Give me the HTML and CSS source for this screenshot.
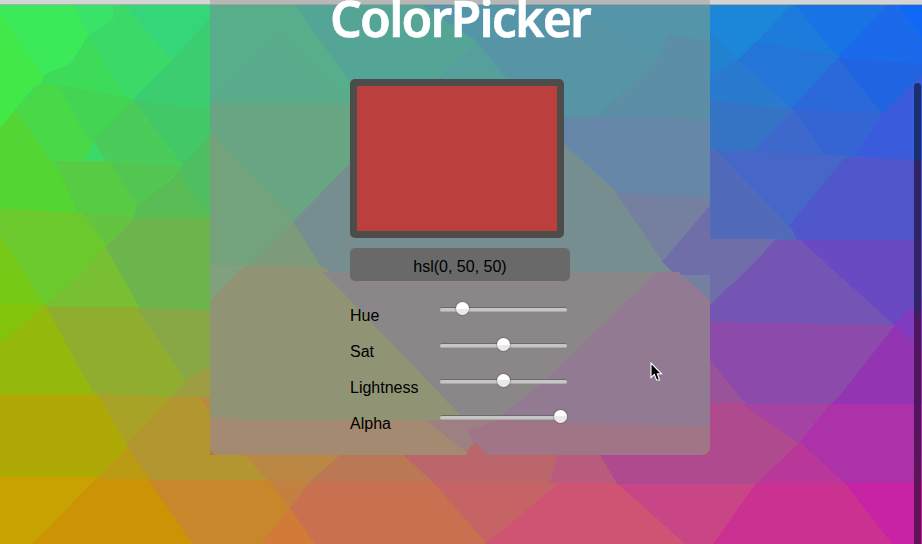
FILE: index.html
```
<!DOCTYPE html>
<html lang="en">
<head>
<meta charset="utf-8">
<title>ColorPicker</title>
<link rel="stylesheet" href="styles.css">
</head>
<body>
<svg class="backdrop" viewBox="0 0 922 544" shape-rendering="crispEdges" aria-hidden="true">
<path fill="#3ad968" d="M0 0H250V220H0z"/>
<path fill="#6fbb36" d="M0 200H210V308H0z"/>
<path fill="#92b01e" d="M0 305H210V396H0z"/>
<path fill="#afa30f" d="M0 394H210V481H0z"/>
<path fill="#ca6a55" d="M210 200H614V544H210z"/>
<path fill="#4166cc" d="M614 0H922V240H614z"/>
<path fill="#7450b4" d="M614 240H922V325H614z"/>
<path fill="#a43c9e" d="M614 325H922V484H614z"/>
<path fill="#cb3a88" d="M614 484H922V544H614z"/>
<path fill="#3ce958" d="M0 5H73L88 35 72 62 45 80 0 15z"/>
<path fill="#41e848" d="M0 15L46 80 33 88 15 110 0 128z"/>
<path fill="#38e368" d="M73 5H113V20L88 35z"/>
<path fill="#35d57a" d="M125 5H210V20L172 60z"/>
<path fill="#3edb59" d="M88 35L75 62 45 74 40 86 60 92 127 100z"/>
<path fill="#3bcd70" d="M172 60L210 18V112L133 100z"/>
<path fill="#49d948" d="M40 83L64 86 95 140 85 161H55L15 110z"/>
<path fill="#44d453" d="M58 85L127 97 135 101 100 142 88 140z"/>
<path fill="#42c866" d="M133 100L210 110V136L183 166z"/>
<path fill="#4bcb59" d="M133 100L185 168H110L93 140z"/>
<path fill="#53d534" d="M0 128L15 110 60 170 83 214H0z"/>
<path fill="#58cb45" d="M55 161H110L138 206 133 219 78 214z"/>
<path fill="#52c651" d="M110 162L183 167 138 208z"/>
<path fill="#4fbe60" d="M181 167L210 135V219L176 174z"/>
<path fill="#59bc55" d="M133 219L138 206 178 173 210 217V219z"/>
<path fill="#6bc92e" d="M0 209L85 213 106 245 86 272 45 306 0 235z"/>
<path fill="#64c340" d="M83 213L135 217 108 248z"/>
<path fill="#6cb54c" d="M135 218H210V312L138 308 105 248z"/>
<path fill="#77c917" d="M0 234L45 306H0z"/>
<path fill="#78bf34" d="M105 246L140 308H44L86 270z"/>
<path fill="#82c30c" d="M0 304H46L0 345z"/>
<path fill="#94b80b" d="M0 344L46 305 97 394H0z"/>
<path fill="#90ad2f" d="M46 307H137L190 380 175 398H96z"/>
<path fill="#88a845" d="M137 308L210 310V369L187 382z"/>
<path fill="#9d9e42" d="M172 398L187 379 210 366V400z"/>
<path fill="#afa906" d="M0 394H97L129 447 95 479H0z"/>
<path fill="#a8a326" d="M97 394L176 397 128 447z"/>
<path fill="#b39630" d="M172 397H205L272 482H149L126 445z"/>
<path fill="#b98845" d="M200 397H210V412z"/>
<path fill="#bb9b14" d="M94 480L127 447 151 480z"/>
<path fill="#c8a200" d="M0 477H98L35 544H0z"/>
<path fill="#cd9307" d="M95 479H150L193 544H33z"/>
<path fill="#c9872c" d="M149 480H271L291 508 262 544H192z"/>
<path fill="#ba8744" d="M245 455H342L310 483H270z"/>
<path fill="#c28140" d="M270 481H312L290 510z"/>
<path fill="#d27a37" d="M291 506L261 544H318z"/>
<path fill="#bb7855" d="M340 455H415L436 483H308z"/>
<path fill="#c97050" d="M310 482H435L487 544H315L290 508z"/>
<path fill="#ba666b" d="M403 455H559V483H434z"/>
<path fill="#c66364" d="M433 482H565L515 524 487 544z"/>
<path fill="#cf5373" d="M560 482H620L686 544H484L515 520z"/>
<path fill="#b95b7c" d="M557 455H602L620 483H550z"/>

<path fill="#1c86d8" d="M710 0H795L738 62 710 80z"/>
<path fill="#1c7bdb" d="M790 5H797L838 58 755 44z"/>
<path fill="#1874e5" d="M795 5H890L838 58z"/>
<path fill="#1b6aec" d="M887 5H922V66L836 58z"/>
<path fill="#0f68f6" d="M898 5H922V38z"/>
<path fill="#2182d0" d="M710 32L740 62 710 78z"/>
<path fill="#2a7acf" d="M710 75L738 58 795 109 710 103z"/>
<path fill="#2376d8" d="M738 60L755 42 840 56 793 110z"/>
<path fill="#2164e2" d="M836 58L922 64V85L882 116z"/>
<path fill="#2b69da" d="M838 58L884 116 790 110z"/>
<path fill="#3573c5" d="M710 101L795 109 755 151H710z"/>
<path fill="#3d69cc" d="M793 109L828 156 753 151z"/>
<path fill="#3565d3" d="M793 109L884 113 858 157H826z"/>
<path fill="#3a5bdc" d="M882 114L922 74V161L855 157z"/>
<path fill="#4666c8" d="M710 150L847 156 790 226z"/>
<path fill="#516bba" d="M710 150H716L802 240H710z"/>
<path fill="#4f57ca" d="M845 157L922 160V242H798L790 225z"/>
<path fill="#706ea9" d="M710 239H777L750 272 710 310z"/>
<path fill="#7455b4" d="M775 240H802L896 326H710V305L755 262z"/>
<path fill="#6a4ac2" d="M800 240H922V312L895 326z"/>
<path fill="#813bc0" d="M892 325L922 300V355z"/>
<path fill="#8c4aaa" d="M710 322L897 325 836 404H744L710 361z"/>
<path fill="#9a5299" d="M710 360L746 404H710z"/>
<path fill="#9335b3" d="M895 325L922 352V405H830L840 395z"/>
<path fill="#b04a8f" d="M600 455H710V403H746L802 443 757 485H618z"/>
<path fill="#a443a2" d="M742 404H832L800 444z"/>
<path fill="#ad31a8" d="M830 404H922V485H845L799 443z"/>
<path fill="#b93799" d="M800 442L847 485H755z"/>
<path fill="#c84685" d="M618 484H758L714 544H685z"/>
<path fill="#cb3190" d="M756 483H846L893 544H713z"/>
<path fill="#c823a4" d="M845 483H922V544H892z"/>

<path fill="#17c07d" d="M210 5H300L350 83V103H210z"/>
<path fill="#1bbd7d" d="M280 30L350 103H210V98z"/>
<path fill="#11b193" d="M295 5H480V120H350V83z"/>
<path fill="#0e90b9" d="M422 5H710V118H440V78L478 42z"/>
<path fill="#13a59e" d="M443 72L478 42 540 120H440z"/>
<path fill="#138fb3" d="M477 42L600 20 657 60 612 100 590 120H540z"/>
<path fill="#1f85b0" d="M657 60L668 35 710 40V122H590z"/>
<path fill="#3575b7" d="M560 117H675L710 122V200L620 195 560 145z"/>
<path fill="#37b16d" d="M210 103H350V165L293 222 210 200z"/>
<path fill="#4fab5f" d="M210 132L296 222 270 266H210z"/>
<path fill="#619d5d" d="M293 222L332 268H247z"/>
<path fill="#538387" d="M350 163L293 222 325 273H672V262L620 195 565 145H350z"/>
<path fill="#5167a7" d="M616 193L710 198V215L665 265z"/>
<path fill="#4743b9" d="M710 205V280H680L662 262z"/>
<path fill="#5167a7" d="M681 275H710V302z"/>
<path fill="#898f4f" d="M210 265L325 267 473 424H210z"/>
<path fill="#67a763" d="M210 265H245L210 300z"/>
<path fill="#7d7577" d="M323 272H663L500 425H470z"/>
<path fill="#895b8b" d="M657 272H678L710 300V428H485L540 385z"/>
<path fill="#ad7b47" d="M210 417L240 420H425L475 448V455H210z"/>
<path fill="#a1676b" d="M425 420H502L470 455z"/>
<path fill="#a75177" d="M467 430L500 420 710 427V455H480z"/>
<path fill="#db333d" d="M467 455V450L475 443 488 455z"/>
</svg>
<div class="toolbar-edge"></div>
<main class="picker">
  <h1>ColorPicker</h1>
  <section class="controls">
    <div class="swatch"></div>
    <div class="value">hsl(0, 50, 50)</div>
    <div class="row"><span class="label">Hue</span><div class="range hue"><i class="thumb"></i></div></div>
    <div class="row"><span class="label">Sat</span><div class="range half"><i class="thumb"></i></div></div>
    <div class="row"><span class="label">Lightness</span><div class="range half"><i class="thumb"></i></div></div>
    <div class="row"><span class="label">Alpha</span><div class="range full"><i class="thumb"></i></div></div>
  </section>
</main>
<div class="scrollbar"></div>
<svg class="pointer" width="14" height="20" viewBox="0 0 14 20" aria-hidden="true"><path d="M1 1V15.5L4.3 12.4 6.6 18H9.5L7.4 11.8H11.5z" fill="#000" stroke="#fff" stroke-width="1.1"/></svg>
</body>
</html>
```
FILE: styles.css
```
* { box-sizing: border-box; }
body {
  margin: 0;
  width: 922px;
  height: 544px;
  overflow: hidden;
  position: relative;
  font: 16px/18px "Liberation Sans", Arial, sans-serif;
  color: #000;
}
.backdrop {
  position: absolute;
  inset: 0;
  width: 922px;
  height: 544px;
}
.toolbar-edge {
  position: absolute;
  inset: 0 0 auto;
  height: 5px;
  background: #d4d4d4;
  border-bottom: 1px solid #a9adab;
}
.picker {
  position: relative;
  width: 500px;
  height: 455px;
  margin-left: 210px;
  background: rgba(153, 153, 153, .5);
  border-radius: 0 0 8px 8px;
  display: flex;
  flex-direction: column;
  align-items: center;
}
h1 {
  margin: 0;
  height: 79px;
  font: 600 50px/36px "Noto Sans", sans-serif;
  letter-spacing: -1.8px;
  -webkit-text-stroke: .6px #fff;
  color: #fff;
  white-space: nowrap;
}
.controls { width: 220px; }
.swatch {
  width: 214px;
  height: 159px;
  border: 7px solid #4c4c4a;
  border-radius: 5px;
  background: #bb403d;
}
.value {
  height: 33px;
  margin: 10px 0 17px;
  padding-top: 10px;
  border-radius: 5px;
  background: #696969;
  text-align: center;
}
.row {
  display: flex;
  height: 36px;
}
.label {
  width: 90px;
  padding-top: 9px;
}
.range {
  display: flex;
  align-items: center;
  width: 127px;
  height: 5px;
  margin-top: 9px;
  border-top: 1px solid #6b696a;
  border-bottom: 1px solid #aaa;
  border-radius: 2px;
  background: #c6c6c6;
}
.thumb {
  flex: none;
  width: 13px;
  height: 13px;
  margin-top: -3px;
  border-radius: 50%;
  background: linear-gradient(#fff 50%, #e9e9e9 50%);
  box-shadow: 0 0 1px 1px rgba(80, 80, 80, .35);
}
.hue .thumb { margin-left: 16px; }
.half .thumb { margin-left: 57px; }
.full .thumb { margin-left: 114px; }
.scrollbar {
  position: absolute;
  top: 83px;
  right: 1px;
  width: 7px;
  height: 480px;
  border-radius: 4px;
  background: linear-gradient(#182f70 0 78px, #2f2466 78px 222px, #50165d 240px 320px, #5f1455 400px);
}
.pointer {
  position: absolute;
  left: 650px;
  top: 362px;
}
```
